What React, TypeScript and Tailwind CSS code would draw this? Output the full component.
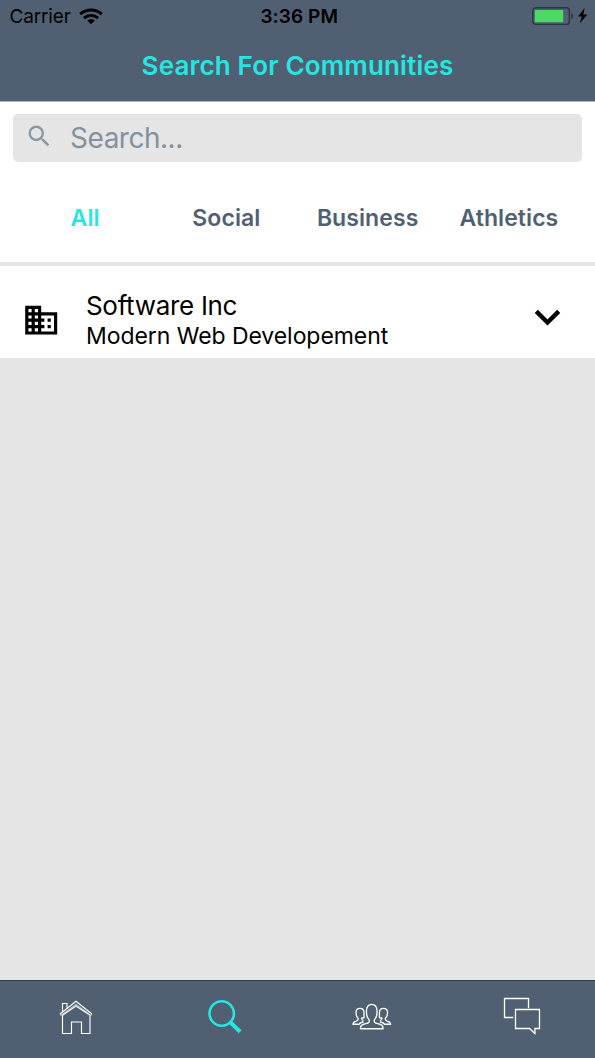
import type { ReactNode } from "react";
import { MdDomain, MdSearch } from "react-icons/md";

function Wifi() {
  return (
    <svg width="24" height="17" viewBox="0 0 24 17" fill="none" stroke="#000" strokeWidth="3">
      <path d="M1.2 6.2C7.3.7 16.7.7 22.8 6.2" />
      <path d="M5 10.1c4-3.6 10-3.6 14 0" />
      <path d="M12 16.3 8.2 12.6c2.1-1.8 5.5-1.8 7.6 0z" fill="#000" stroke="none" />
    </svg>
  );
}

function Battery() {
  return (
    <svg width="56" height="18" viewBox="0 0 56 18" fill="none">
      <rect x=".8" y=".8" width="36.6" height="16.6" rx="3" stroke="#2b3441" strokeWidth="1.4" />
      <rect x="2.8" y="3" width="28.4" height="12.2" fill="#4cd964" />
      <path d="M39.2 6.2c2.6.8 2.6 5 0 5.8z" fill="#2b3441" />
      <path d="M52.6 1 46.1 9.6h3.7l-1.9 6.6L55.3 7.4h-4z" fill="#000" />
    </svg>
  );
}

function StatusBar() {
  return (
    <div className="grid h-8 grid-cols-3 items-center pr-[7px] pl-[9.5px] text-[19px] text-black">
      <div className="flex items-center gap-[8px]">
        <span className="pt-[2px] tracking-[-0.15px]">Carrier</span>
        <Wifi />
      </div>
      <span className="pt-[2px] pl-px text-center font-semibold tracking-[0.1px] whitespace-nowrap">3:36 PM</span>
      <div className="flex justify-end">
        <Battery />
      </div>
    </div>
  );
}

function House() {
  return (
    <svg width="34" height="36" viewBox="0 0 34 36" fill="none" stroke="#fff" strokeWidth="1.15">
      <path d="M1 14 17 1.3 33 14" />
      <path d="M1 14l1 1.2L17 4.4l15 10.8 1-1.2" strokeOpacity=".6" />
      <path d="M3.5 15.2v18.3h9V22h10v11.5h8.5V15.2L17 6z" />
      <path d="M3.5 11.5v-8H8v4.3" />
    </svg>
  );
}

function Glass() {
  return (
    <svg width="34" height="35" viewBox="0 0 34 35" fill="none" stroke="#26e6e1">
      <circle cx="13.7" cy="13.5" r="12.2" strokeWidth="2.6" />
      <path d="m21.5 21.8 2 1.7" strokeWidth="2.5" />
      <path d="m22.8 22.8 9.4 9" strokeWidth="4" />
    </svg>
  );
}

function People() {
  return (
    <svg width="39.5" height="28" viewBox="0 0 40 28" fill="none" stroke="#fff" strokeWidth="1.35" strokeLinejoin="round">
      <path d="M17.3 16.8c-2-1.8-2.7-4.8-2.7-8.1C14.6 4 16.5 1.2 20 1.2s5.4 2.8 5.4 7.5c0 3.3-.7 6.3-2.7 8.1-.7 2.4.3 3.3 3.3 4 4.1.9 5.4 1.7 5.5 5.1h-23c.1-3.4 1.4-4.2 5.5-5.1 3-.7 4-1.6 3.3-4z" />
      <path d="M6.3 15.2C4.2 13.5 4 11.5 4 9.7c0-3.1 1.7-4.5 4.1-4.5s4.1 1.4 4.1 4.5v5.2H9.8c-.4 1.6.4 2.3 1.9 2.8M6.3 15.2c.3 1.9-.3 2.4-2 2.9-2.2.5-3.1 1.2-3.4 3.2h6.4c.2-1.3 1.7-1.8 4.4-2.5" />
      <path d="M33.7 15.2c2.1-1.7 2.3-3.7 2.3-5.5 0-3.1-1.7-4.5-4.1-4.5s-4.1 1.4-4.1 4.5v5.2h2.4c.4 1.6-.4 2.3-1.9 2.8M33.7 15.2c-.3 1.9.3 2.4 2 2.9 2.2.5 3.1 1.2 3.4 3.2h-6.4c-.2-1.3-1.7-1.8-4.4-2.5" />
    </svg>
  );
}

function Chats() {
  return (
    <svg width="38" height="38" viewBox="0 0 38 38" fill="none" stroke="#fff" strokeWidth="1.3">
      <path d="M10.3 20.5H1.5V1.5H25.5v9.7" />
      <path d="M12.5 12.5h24v19h-4.6v5l-5.4-5h-14z" />
    </svg>
  );
}

function Tab({ active = false, children }: { active?: boolean; children: ReactNode }) {
  return (
    <button className={active ? "text-center text-[#26e6e1]" : "text-center text-[#505f72]"}>{children}</button>
  );
}

export default function App() {
  return (
    <div className="flex h-[1058px] w-[595px] flex-col overflow-hidden bg-[#e5e5e5] font-['Inter','Liberation_Sans',sans-serif]">
      <header className="h-[102px] shrink-0 border-b border-[#a7afb8] bg-[#505f72]">
        <StatusBar />
        <h1 className="pt-[14px] text-center text-[26px] leading-[40px] font-semibold tracking-[0.17px] text-[#26e6e1]">
          Search For Communities
        </h1>
      </header>

      <section className="flex h-[164px] shrink-0 flex-col border-b-4 border-[#e5e5e5] bg-white px-[13px] pt-3">
        <div className="flex h-[48px] shrink-0 items-center rounded-[5px] bg-[#e5e5e5] pl-[12.4px]">
          <MdSearch className="mb-[3px] size-[28.5px] text-[#8897a4]" />
          <span className="ml-[16.2px] text-[28px] leading-[46px] tracking-[-0.5px] text-[#83919d]">Search...</span>
        </div>
        <nav className="mx-[1.5px] grid flex-1 grid-cols-4 pt-[12px] pr-px text-[23px] font-semibold tracking-[0.08px]">
          <Tab active>All</Tab>
          <Tab>Social</Tab>
          <Tab>Business</Tab>
          <Tab>Athletics</Tab>
        </nav>
      </section>

      <article className="flex h-[92px] shrink-0 bg-white pl-[21.8px] text-black">
        <MdDomain className="mt-[34.6px] size-[38.4px]" />
        <div className="ml-[25.8px] flex-1 pt-[24px] whitespace-nowrap">
          <h2 className="text-[26px] leading-[31px] tracking-[-0.3px]">Software Inc</h2>
          <p className="text-[23px] leading-[30px] tracking-[-0.06px]">Modern Web Developement</p>
        </div>
        <svg className="mt-[43px] mr-[34px]" width="27" height="18" viewBox="0 0 27 18" fill="none" stroke="#000" strokeWidth="4.4">
          <path d="m2.3 2.4 11.2 11.1L24.7 2.4" />
        </svg>
      </article>

      <main className="flex-1" />

      <footer className="grid h-[78px] shrink-0 grid-cols-4 justify-items-center border-t border-[#2e3c4a] bg-[#505f72] pl-[2px]">
        <div className="pt-[18.5px] pr-px"><House /></div>
        <div className="pt-[19px] pl-px"><Glass /></div>
        <div className="pt-[22px] pr-px"><People /></div>
        <div className="pt-[16px] pl-[2px]"><Chats /></div>
      </footer>
    </div>
  );
}
